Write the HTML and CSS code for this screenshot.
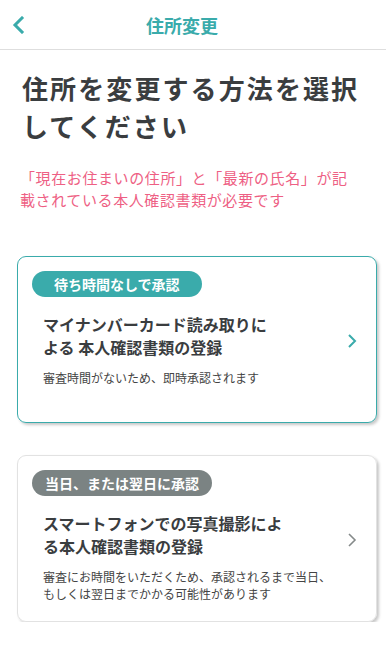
FILE: index.html
```html
<!DOCTYPE html>
<html lang="ja">
<head>
  <meta charset="UTF-8">
  <meta name="viewport" content="width=device-width, initial-scale=1.0">
  <title>住所変更</title>
  <link rel="stylesheet" href="styles.css">
</head>
<body>
  <header class="top-bar">
    <button class="back-btn" aria-label="戻る">
      <svg width="14" height="18" viewBox="0 0 14 18"><path d="M10 2 L3 9 L10 16" fill="none" stroke="#3aabab" stroke-width="3" stroke-linecap="square"/></svg>
    </button>
    <h1>住所変更</h1>
  </header>

  <main class="content">
    <h2 class="page-title">住所を変更する方法を選択してください</h2>
    <p class="notice">「現在お住まいの住所」と「最新の氏名」が記載されている本人確認書類が必要です</p>

    <div class="options">
      <a class="option option-primary" href="#">
        <div class="option-body">
          <span class="badge">待ち時間なしで承認</span>
          <h3>マイナンバーカード読み取りに<br>よる 本人確認書類の登録</h3>
          <p>審査時間がないため、即時承認されます</p>
        </div>
        <svg class="chevron" width="10" height="16" viewBox="0 0 10 16"><path d="M2 2 L8 8 L2 14" fill="none" stroke="#3aabab" stroke-width="2"/></svg>
      </a>

      <a class="option" href="#">
        <div class="option-body">
          <span class="badge badge-gray">当日、または翌日に承認</span>
          <h3>スマートフォンでの写真撮影によ<br>る本人確認書類の登録</h3>
          <p>審査にお時間をいただくため、承認されるまで当日、<br>もしくは翌日までかかる可能性があります</p>
        </div>
        <svg class="chevron" width="10" height="16" viewBox="0 0 10 16"><path d="M2 2 L8 8 L2 14" fill="none" stroke="#858a8a" stroke-width="1.6"/></svg>
      </a>
    </div>
  </main>
</body>
</html>
```

FILE: styles.css
```css
:root {
  --teal: #3aabab;
  --dark: #3a3d3f;
  --pink: #ee5f84;
  --gray: #7b8383;
}

* {
  margin: 0;
  padding: 0;
  box-sizing: border-box;
}

body {
  font-family: "Noto Sans CJK JP", "Noto Sans", sans-serif;
  background: #fff;
  color: var(--dark);
  width: 386px;
}

.top-bar {
  height: 50px;
  border-bottom: 1px solid #dedede;
  display: flex;
  align-items: center;
  justify-content: center;
  position: relative;
}

.top-bar h1 {
  font-size: 18px;
  font-weight: 700;
  color: var(--teal);
  margin-top: 1px;
  margin-right: 22px;
}

.back-btn {
  position: absolute;
  left: 12px;
  top: 16px;
  background: none;
  border: none;
  width: 14px;
  height: 18px;
}

.back-btn svg {
  display: block;
}

.content {
  padding: 19px 9px 0 22px;
}

.page-title {
  font-size: 26px;
  font-weight: 700;
  line-height: 38px;
  letter-spacing: 2.1px;
  color: var(--dark);
}

.notice {
  margin-top: 22px;
  margin-left: -2px;
  margin-right: 22px;
  font-size: 15px;
  line-height: 22px;
  color: var(--pink);
  letter-spacing: 0.6px;
}

.options {
  margin-left: -5px;
  margin-top: 45px;
  display: flex;
  flex-direction: column;
  gap: 32px;
}

.option {
  display: flex;
  align-items: flex-start;
  height: 167px;
  border: 1px solid #e2e2e2;
  border-radius: 9px;
  box-shadow: 2px 2px 3px rgba(0, 0, 0, 0.22);
  text-decoration: none;
  color: var(--dark);
  padding: 14px 19px 0 14px;
}

.option-primary {
  border-color: var(--teal);
}

.option-body {
  flex: 1;
}

.badge {
  display: inline-block;
  height: 26px;
  line-height: 26px;
  padding: 0 22px;
  border-radius: 13px;
  background: var(--teal);
  color: #fff;
  font-size: 14px;
  font-weight: 700;
}

.badge-gray {
  background: var(--gray);
  padding: 0 13px;
}

.option h3 {
  margin-top: 16px;
  margin-left: 11px;
  font-size: 16px;
  font-weight: 700;
  line-height: 23px;
}

.option p {
  margin-top: 10px;
  margin-left: 11px;
  font-size: 12px;
  line-height: 17px;
  color: #444;
}

.chevron {
  margin-top: 62px;
}
```
